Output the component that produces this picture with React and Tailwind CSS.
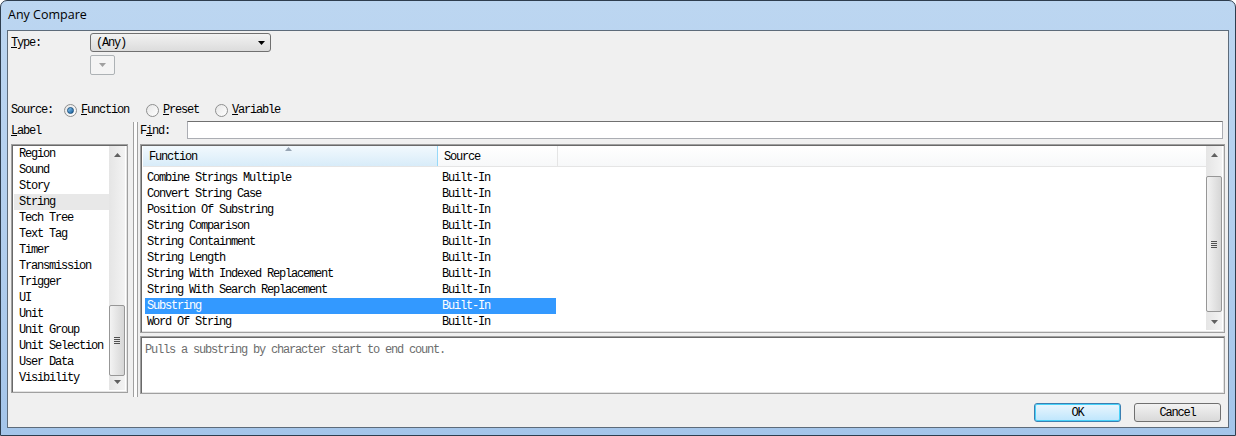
import React from 'react';

const mono = "font-['Liberation_Mono',monospace] text-[12px] tracking-[-1.2px]";

const labels = ['Region', 'Sound', 'Story', 'String', 'Tech Tree', 'Text Tag', 'Timer', 'Transmission', 'Trigger', 'UI', 'Unit', 'Unit Group', 'Unit Selection', 'User Data', 'Visibility'];

const functions = [
    'Combine Strings Multiple',
    'Convert String Case',
    'Position Of Substring',
    'String Comparison',
    'String Containment',
    'String Length',
    'String With Indexed Replacement',
    'String With Search Replacement',
    'Substring',
    'Word Of String',
];

const Arrow = ({ down, color = '#4d4d4d' }) => (
    <svg width="7" height="4" viewBox="0 0 7 4">
        <path d={down ? 'M0 0h7L3.5 4z' : 'M3.5 0L7 4H0z'} fill={color} />
    </svg>
);

// Win7 style vertical scrollbar
const ScrollBar = ({ thumbTop, thumbHeight }) => (
    <div className="w-[16px] self-stretch flex flex-col bg-gradient-to-r from-[#e5e5e5] to-[#f3f3f3]">
        <div className="h-[17px] flex items-center justify-center">
            <Arrow color="#606060" />
        </div>
        <div className="flex-1 relative">
            <div
                className="absolute left-0 right-0 rounded-[2px] border border-[#979797] bg-gradient-to-r from-[#f3f3f3] to-[#d6d6d6] flex items-center justify-center"
                style={{ top: thumbTop, height: thumbHeight }}
            >
                <div className="flex flex-col gap-[1px]">
                    <div className="w-[6px] h-[1px] bg-[#505050]" />
                    <div className="w-[6px] h-[1px] bg-[#505050]" />
                    <div className="w-[6px] h-[1px] bg-[#505050]" />
                    <div className="w-[6px] h-[1px] bg-[#505050]" />
                </div>
            </div>
        </div>
        <div className="h-[17px] flex items-center justify-center">
            <Arrow down color="#606060" />
        </div>
    </div>
);

const Radio = ({ checked }) => (
    <div className="w-[13px] h-[13px] rounded-full border border-[#8e8f8f] bg-gradient-to-br from-[#e6e6e6] to-[#ffffff] flex items-center justify-center">
        {checked && <div className="w-[7px] h-[7px] rounded-full bg-gradient-to-br from-[#8ccdf7] to-[#0d5c9a] border border-[#1a4e7c]" />}
    </div>
);

const Sunken = 'border border-[#a0a0a0] shadow-[inset_1px_1px_0_#696969,inset_-1px_-1px_0_#e3e3e3]';

export default function App() {
    return (
        <div className="w-[1236px] h-[436px] flex flex-col rounded-t-[7px] border border-[#2e3d4e] bg-gradient-to-b from-[#bcd6f1] via-[#b3cfee] to-[#a4c5ea] overflow-hidden">
            <div className="h-[29px] flex items-center pl-[7px] font-['Open_Sans',sans-serif] text-[12.5px] text-black">
                Any Compare
            </div>

            <div className={`mx-[6px] h-[398px] border border-[#5d6b7a] bg-[#f0f0f0] flex flex-col ${mono} text-black`}>
                <div className="mt-[2px] h-[19px] flex items-center">
                    <div className="pl-[3px] w-[82px]"><span className="underline">T</span>ype:</div>
                    <div className="w-[181px] h-[19px] rounded-[3px] border border-[#707070] bg-gradient-to-b from-[#f2f2f2] to-[#dcdcdc] flex items-center justify-between pl-[5px] pr-[5px]">
                        <span>(Any)</span>
                        <Arrow down color="#000" />
                    </div>
                </div>
                <div className="mt-[3px] ml-[82px] w-[25px] h-[20px] rounded-[2px] border border-[#adb2b5] bg-[#f4f4f4] flex items-center justify-center">
                    <Arrow down color="#a0a0a0" />
                </div>

                <div className="mt-[27px] h-[16px] flex items-center pl-[3px]">
                    <span className="w-[53px]">Source:</span>
                    <div className="flex items-center gap-[4px]">
                        <Radio checked />
                        <span><span className="underline">F</span>unction</span>
                    </div>
                    <div className="flex items-center gap-[4px] ml-[17px]">
                        <Radio />
                        <span><span className="underline">P</span>reset</span>
                    </div>
                    <div className="flex items-center gap-[4px] ml-[16px]">
                        <Radio />
                        <span><span className="underline">V</span>ariable</span>
                    </div>
                </div>

                <div className="mt-[3px] flex pr-[3px]">
                    <div className="pl-[3px] w-[120px] flex flex-col">
                        <div className="h-[18px] flex items-center pt-[1px]"><span className="underline">L</span>abel</div>
                        <div className={`mt-[5px] h-[249px] ${Sunken} bg-white flex p-[2px] pt-[1px]`}>
                            <div className="flex-1">
                                {labels.map((l) => (
                                    <div key={l} className={`h-[16px] leading-[16px] pl-[5px] ${l === 'String' ? 'bg-[#e8e8e8]' : ''}`}>{l}</div>
                                ))}
                            </div>
                            <ScrollBar thumbTop={142} thumbHeight={71} />
                        </div>
                    </div>

                    <div className="ml-[5px] mt-[1px] mb-[-3px] w-[5px] border-l border-r border-[#a0a0a0] bg-[#fcfcfc]" />

                    <div className="ml-[2px] flex-1 flex flex-col">
                        <div className="h-[18px] flex items-center">
                            <span className="w-[47px] pt-[1px]">F<span className="underline">i</span>nd:</span>
                            <div className="w-[1036px] h-[18px] border border-[#abadb3] border-t-[#707070] bg-white" />
                        </div>

                        <div className={`mt-[5px] h-[189px] ${Sunken} bg-white flex p-[2px] pt-[1px]`}>
                            <div className="flex-1 flex flex-col">
                                <div className="h-[22px] flex border-b border-[#e5e5e5]">
                                    <div className="relative w-[295px] pl-[6px] pt-[2px] flex items-center bg-gradient-to-b from-[#f2f9fd] to-[#d8ecf9] border-r border-[#96d9f9]">
                                        Function
                                        <div className="absolute top-[1px] left-[142px]">
                                            <Arrow color="#97a5b4" />
                                        </div>
                                    </div>
                                    <div className="w-[120px] pl-[6px] pt-[2px] flex items-center bg-gradient-to-b from-white to-[#f7f8f9] border-r border-[#e5e5e5]">Source</div>
                                    <div className="flex-1 bg-gradient-to-b from-white to-[#f7f8f9]" />
                                </div>
                                <div className="pt-[3px] pl-[2px]">
                                    {functions.map((f) => {
                                        const sel = f === 'Substring';
                                        return (
                                            <div key={f} className={`w-[411px] h-[16px] leading-[16px] flex ${sel ? 'bg-[#3399ff] text-white' : ''}`}>
                                                <span className="w-[297px] pl-[2px]">{f}</span>
                                                <span>Built-In</span>
                                            </div>
                                        );
                                    })}
                                </div>
                            </div>
                            <ScrollBar thumbTop={13} thumbHeight={136} />
                        </div>

                        <div className={`mt-[3px] h-[58px] ${Sunken} bg-white pl-[4px] pt-[4px] text-[#6d6d6d]`}>
                            Pulls a substring by character start to end count.
                        </div>
                    </div>
                </div>

                <div className="mt-[9px] flex justify-end pr-[7px] gap-[13px]">
                    <div className="w-[87px] h-[19px] pt-[1px] rounded-[3px] border border-[#3c7fb1] shadow-[inset_0_0_0_1px_#48d2f9] bg-gradient-to-b from-[#eaf6fd] to-[#bee6fd] flex items-center justify-center">OK</div>
                    <div className="w-[87px] h-[19px] pt-[1px] rounded-[3px] border border-[#707070] bg-gradient-to-b from-[#f2f2f2] to-[#d9d9d9] flex items-center justify-center">Cancel</div>
                </div>
            </div>
        </div>
    );
}
